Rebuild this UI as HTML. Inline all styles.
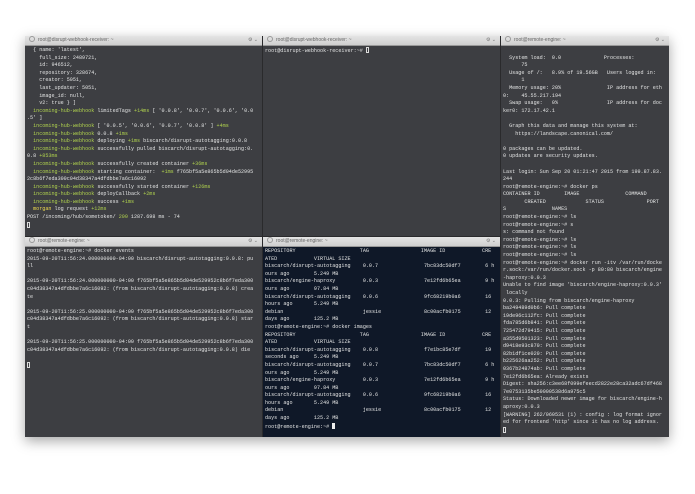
<!DOCTYPE html>
<html><head><meta charset="utf-8"><style>
body{margin:0;width:695px;height:494px;background:#fff;position:relative;overflow:hidden}
.win{position:absolute;left:25px;top:36px;width:644px;height:401px;background:#2a2a2c;box-shadow:0 4px 12px rgba(0,0,0,.35)}
.p{position:absolute;background:#3d3e42;overflow:hidden}
.t{height:9px;background:linear-gradient(#e4e4e4,#cfcfcf);border-bottom:1px solid #999;font:5px "Liberation Sans",sans-serif;color:#666;line-height:9px;padding-left:4px;position:relative;white-space:nowrap}
.t:before{content:"";display:inline-block;width:4px;height:4px;border:1px solid #999;border-radius:50%;margin-right:3px;vertical-align:-1px}
.t span{position:absolute;right:4px;top:0;color:#777}
pre{margin:0;padding:1px 2px;font:5.1px/7.6px "Liberation Mono",monospace;color:#e2e3e3;white-space:pre}
.g{color:#b0d24e}.y{color:#f0dc4e}
.n{background:#0f1828}
.c{display:inline-block;width:3px;height:6px;border:1px solid #ddd;box-sizing:border-box;vertical-align:-1px}
.cf{display:inline-block;width:3px;height:6px;background:#eee;vertical-align:-1px}
</style></head><body>
<div class="win">
<div class="p" style="left:0;top:0;width:237px;height:200px"><div class="t">root@disrupt-webhook-receiver: ~<span>⚙ ⌄</span></div><pre>  { name: 'latest',
    full_size: 2489721,
    id: 946512,
    repository: 328674,
    creator: 5051,
    last_updater: 5051,
    image_id: null,
    v2: true } ]
  <span class="g">incoming-hub-webhook</span> limitedTags <span class="g">+14ms</span> [ '0.0.8', '0.0.7', '0.0.6', '0.0
.5' ]
  <span class="g">incoming-hub-webhook</span> [ '0.0.5', '0.0.6', '0.0.7', '0.0.8' ] <span class="g">+4ms</span>
  <span class="g">incoming-hub-webhook</span> 0.0.8 <span class="g">+1ms</span>
  <span class="g">incoming-hub-webhook</span> deploying <span class="g">+1ms</span> biscarch/disrupt-autotagging:0.0.8
  <span class="g">incoming-hub-webhook</span> successfully pulled biscarch/disrupt-autotagging:0.
0.8 <span class="g">+853ms</span>
  <span class="g">incoming-hub-webhook</span> successfully created container <span class="g">+36ms</span>
  <span class="g">incoming-hub-webhook</span> starting container:  <span class="g">+1ms</span> f765bf5a5e865b5d04de52995
2c8b6f7eda300c04d38347a4dfdbbe7a6c16092
  <span class="g">incoming-hub-webhook</span> successfully started container <span class="g">+126ms</span>
  <span class="g">incoming-hub-webhook</span> deployCallback <span class="g">+2ms</span>
  <span class="g">incoming-hub-webhook</span> success <span class="g">+1ms</span>
  <span class="y">morgan</span> log request <span class="g">+12ms</span>
POST /incoming/hub/sometoken/ <span class="g">200</span> 1287.698 ms - 74
<span class="c"></span></pre></div>
<div class="p" style="left:238px;top:0;width:237px;height:200px"><div class="t">root@disrupt-webhook-receiver: ~<span>⚙ ⌄</span></div><pre>root@disrupt-webhook-receiver:~# <span class="c"></span></pre></div>
<div class="p" style="left:476px;top:0;width:168px;height:401px"><div class="t">root@remote-engine: ~<span>⚙ ⌄</span></div><pre>

  System load:  0.0              Processes:
      75
  Usage of /:   8.9% of 19.56GB   Users logged in:
      1
  Memory usage: 20%               IP address for eth
0:    45.55.217.194
  Swap usage:   0%                IP address for doc
ker0: 172.17.42.1

  Graph this data and manage this system at:
    https://landscape.canonical.com/

0 packages can be updated.
0 updates are security updates.

Last login: Sun Sep 20 01:21:47 2015 from 199.87.83.
244
root@remote-engine:~# docker ps
CONTAINER ID        IMAGE               COMMAND
       CREATED             STATUS              PORT
S               NAMES
root@remote-engine:~# ls
root@remote-engine:~# s
s: command not found
root@remote-engine:~# ls
root@remote-engine:~# ls
root@remote-engine:~# ls
root@remote-engine:~# docker run -itv /var/run/docke
r.sock:/var/run/docker.sock -p 80:80 biscarch/engine
-haproxy:0.0.3
Unable to find image 'biscarch/engine-haproxy:0.0.3'
 locally
0.0.3: Pulling from biscarch/engine-haproxy
ba249489d0b6: Pull complete
19de96c112fc: Pull complete
fda785d6b841: Pull complete
725472d79415: Pull complete
a355d9501323: Pull complete
d9418e93c870: Pull complete
82b1df1ce020: Pull complete
b225626aa252: Pull complete
0367b24874ab: Pull complete
7e12fd6b65ea: Already exists
Digest: sha256:c3ee68f099efeecd2822e28ca32adc67df468
7e0753135be50000538d6a975c5
Status: Downloaded newer image for biscarch/engine-h
aproxy:0.0.3
[WARNING] 262/060531 (1) : config : log format ignor
ed for frontend 'http' since it has no log address.
<span class="c"></span></pre></div>
<div class="p" style="left:0;top:201px;width:237px;height:200px"><div class="t">root@remote-engine: ~<span>⚙ ⌄</span></div><pre>root@remote-engine:~# docker events
2015-09-20T11:56:24.000000000-04:00 biscarch/disrupt-autotagging:0.0.8: pu
ll

2015-09-20T11:56:24.000000000-04:00 f765bf5a5e865b5d04de529952c8b6f7eda300
c04d38347a4dfdbbe7a6c16092: (from biscarch/disrupt-autotagging:0.0.8) crea
te

2015-09-20T11:56:25.000000000-04:00 f765bf5a5e865b5d04de529952c8b6f7eda300
c04d38347a4dfdbbe7a6c16092: (from biscarch/disrupt-autotagging:0.0.8) star
t

2015-09-20T11:56:25.000000000-04:00 f765bf5a5e865b5d04de529952c8b6f7eda300
c04d38347a4dfdbbe7a6c16092: (from biscarch/disrupt-autotagging:0.0.8) die

<span class="c"></span></pre></div>
<div class="p n" style="left:238px;top:201px;width:237px;height:200px"><div class="t">root@remote-engine: ~<span>⚙ ⌄</span></div><pre>REPOSITORY                     TAG                 IMAGE ID            CRE
ATED            VIRTUAL SIZE
biscarch/disrupt-autotagging    0.0.7               7bc83dc50df7        6 h
ours ago        5.249 MB
biscarch/engine-haproxy         0.0.3               7e12fd6b65ea        9 h
ours ago        97.84 MB
biscarch/disrupt-autotagging    0.0.6               9fc68219b0a6        16
hours ago       5.249 MB
debian                          jessie              8c00acfb0175        12
days ago        125.2 MB
root@remote-engine:~# docker images
REPOSITORY                     TAG                 IMAGE ID            CRE
ATED            VIRTUAL SIZE
biscarch/disrupt-autotagging    0.0.8               f7e1bc85e7df        19
seconds ago     5.249 MB
biscarch/disrupt-autotagging    0.0.7               7bc83dc50df7        6 h
ours ago        5.249 MB
biscarch/engine-haproxy         0.0.3               7e12fd6b65ea        9 h
ours ago        97.84 MB
biscarch/disrupt-autotagging    0.0.6               9fc68219b0a6        16
hours ago       5.249 MB
debian                          jessie              8c00acfb0175        12
days ago        125.2 MB
root@remote-engine:~# <span class="cf"></span></pre></div>
</div>
</body></html>
